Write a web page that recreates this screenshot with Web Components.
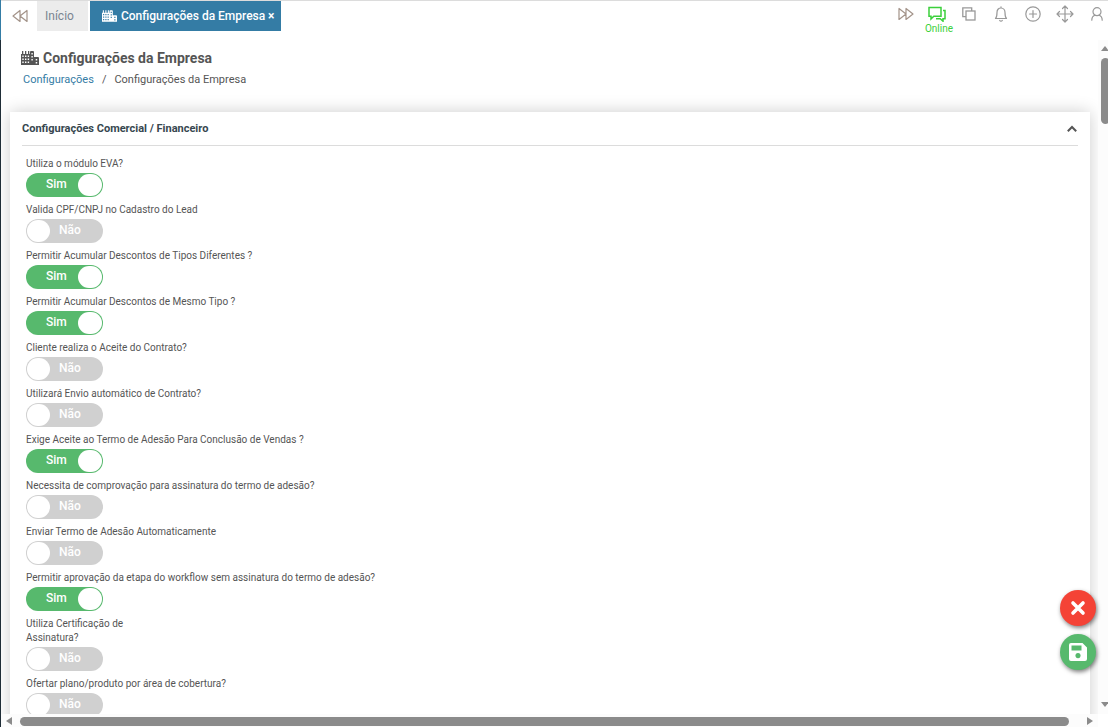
<!DOCTYPE html>
<html lang="pt-BR">
<head>
<meta charset="utf-8">
<title>Configurações da Empresa</title>
<style>
html,body{margin:0;height:100%;overflow:hidden}
body{font-family:Roboto,"Open Sans",sans-serif;color:#555;background:#fff;--blue:#347ca5;--green:#57b96d}
</style>
</head>
<body>
<app-shell>
  <top-bar slot="top"></top-bar>
  <page-header></page-header>
  <config-panel heading="Configurações Comercial / Financeiro">
    <switch-field label="Utiliza o módulo EVA?" on></switch-field>
    <switch-field label="Valida CPF/CNPJ no Cadastro do Lead"></switch-field>
    <switch-field label="Permitir Acumular Descontos de Tipos Diferentes ?" on></switch-field>
    <switch-field label="Permitir Acumular Descontos de Mesmo Tipo ?" on></switch-field>
    <switch-field label="Cliente realiza o Aceite do Contrato?"></switch-field>
    <switch-field label="Utilizará Envio automático de Contrato?"></switch-field>
    <switch-field label="Exige Aceite ao Termo de Adesão Para Conclusão de Vendas ?" on></switch-field>
    <switch-field label="Necessita de comprovação para assinatura do termo de adesão?"></switch-field>
    <switch-field label="Enviar Termo de Adesão Automaticamente"></switch-field>
    <switch-field label="Permitir aprovação da etapa do workflow sem assinatura do termo de adesão?" on></switch-field>
    <switch-field label="Utiliza Certificação de Assinatura?" narrow></switch-field>
    <switch-field label="Ofertar plano/produto por área de cobertura?"></switch-field>
  </config-panel>
  <action-button slot="actions" kind="cancel" label="Cancelar"></action-button>
  <action-button slot="actions" kind="save" label="Salvar"></action-button>
</app-shell>
<script>
const define = (name, render) => customElements.define(name, class extends HTMLElement {
  constructor() { super(); this.attachShadow({mode: 'open'}); }
  connectedCallback() { this.shadowRoot.innerHTML = render(this); }
});

const outline = 'fill="none" stroke="currentColor" stroke-width="1.2" stroke-linejoin="round" stroke-linecap="round"';
const icons = {
  back: `<svg width="16" height="14" viewBox="0 0 16 14" ${outline}><path d="M8 1.5v11L1 7zM15 1.5v11L8 7z"/></svg>`,
  forward: `<svg width="16" height="14" viewBox="0 0 16 14" ${outline}><path d="M1 1.5v11L8 7zM8 1.5v11L15 7z"/></svg>`,
  chat: `<svg width="18" height="16" viewBox="0 0 18 16" fill="none" stroke="currentColor" stroke-width="1.5"><path d="M1 1.5h12v8.7H5.8L3 13v-2.8H1z"/><path d="M15 4.5h2v8.3h-2v2.4l-2.8-2.4H8"/></svg>`,
  copy: `<svg width="16" height="16" viewBox="0 0 16 16" fill="none" stroke="currentColor" stroke-width="1.3"><rect x="5" y="5" width="9" height="9"/><path d="M5 10.700H1.800V1.800H10.700V5"/></svg>`,
  bell: `<svg width="14" height="16" viewBox="0 0 14 16" ${outline}><path d="M1.500 12.500h11C11 11 11 9.500 11 6.500 11 4 9.500 2 7 2S3 4 3 6.500c0 3 0 4.500-1.500 6zM7 .8V2M5.700 14.500c.6.900 2 .9 2.600 0"/></svg>`,
  plus: `<svg width="16" height="16" viewBox="0 0 16 16" ${outline}><circle cx="8" cy="8" r="7.200"/><path d="M8 4.500v7M4.500 8h7"/></svg>`,
  move: `<svg width="18" height="18" viewBox="0 0 18 18" ${outline}><path d="M9 1v16M1 9h16M6.500 3.500L9 1l2.500 2.500M6.500 14.500L9 17l2.500-2.500M3.500 6.500L1 9l2.500 2.500M14.500 6.500L17 9l-2.500 2.500"/></svg>`,
  user: `<svg width="12" height="14" viewBox="0 0 12 14" ${outline} ><circle cx="6" cy="4.700" r="4"/><path d="M.8 13.200c0-2.700 1.200-4.300 3-5M11.200 13.200c0-2.700-1.200-4.300-3-5"/></svg>`,
  city: `<svg width="100%" height="100%" viewBox="0 0 18 14"><path fill="currentColor" fill-rule="evenodd" d="M0 3h1V0h1.300v3H4V0h1.300v3H7V0h1.300v3H9V1q0-1 1-1h2q1 0 1 1v5h4q1 0 1 1v7H0zM1.300 4.500v1.500h1.400V4.500zM4 4.500v1.500h1.400V4.500zM6.700 4.500v1.500h1.400V4.500zM1.300 7.500V9h1.400V7.500zM4 7.500V9h1.400V7.500zM6.700 7.500V9h1.400V7.500zM1.300 10.500V12h1.400v-1.500zM4 10.500V12h1.400v-1.500zM6.700 10.500V12h1.400v-1.500zM10.400 2v1.500h1.400V2zM10.400 5v1.500h1.400V5zM10.400 8v1.500h1.400V8zM14.700 8v1.500h1.500V8zM14.700 11v1.500h1.500V11z"/></svg>`
};

define('app-shell', () => `
<style>
:host{display:grid;height:100vh;grid-template-rows:40px 1fr;border-left:1px solid #1f2d37;box-sizing:border-box;position:relative}
:host::before{content:"";position:absolute;left:-1px;top:0;width:1px;height:40px;background:var(--blue)}
.body{display:grid;grid-template-columns:1fr 10px;grid-template-rows:1fr 13px;min-height:0;min-width:0;position:relative}
main{overflow:hidden;min-width:0;min-height:0;padding:8px 8px 0 9px}
scroll-bar[across]{grid-column:1}
.actions{position:absolute;right:12px;bottom:57px;display:grid;gap:8px}
</style>
<slot name="top"></slot>
<div class="body">
  <main><slot></slot></main>
  <scroll-bar></scroll-bar>
  <scroll-bar across></scroll-bar>
  <div class="actions"><slot name="actions"></slot></div>
</div>`);

define('scroll-bar', el => el.hasAttribute('across') ? `
<style>
:host{display:flex;align-items:center;background:#fcfcfc;padding:1px 5px 0 5px;gap:8px}
.thumb{flex:1;height:9px;border-radius:5px;background:#8b8b8b;margin-right:10px}
i{border:4px solid transparent;border-right:6px solid #8b8b8b;border-left:0}
i.end{border-right:0;border-left:6px solid #8b8b8b}
</style><i></i><div class="thumb"></div><i class="end"></i>` : `
<style>
:host{display:flex;flex-direction:column;align-items:flex-start;background:#fcfcfc;padding:6px 0 7px 3px;box-sizing:border-box;overflow:hidden}
.thumb{height:10%;width:9px;border-radius:5px;background:#8b8b8b;margin:7px 0 auto}
i{border:4px solid transparent;border-bottom:5px solid #8b8b8b;border-top:0}
i.end{border-bottom:0;border-top:5px solid #8b8b8b}
</style><i></i><div class="thumb"></div><i class="end"></i>`);

define('top-bar', () => `
<style>
:host{display:flex;justify-content:space-between;align-items:flex-start;border-top:1px solid #dcdcdc;background:#fff}
nav,.tools{display:flex}
nav{gap:2px}
a{display:flex;align-items:center;height:30px;box-sizing:border-box;font-size:12px;text-decoration:none;color:#7b8591;background:#ececec;padding:0 14px 0 8px}
a.on{background:var(--blue);color:#fff;font-weight:500;padding:0 0 0 12px}
.active{display:flex;background:var(--blue)}
.city{width:15px;height:12px;margin-right:4px;display:flex}
button{border:0;background:none;padding:0;margin:0;font:inherit;color:#999;display:flex;justify-content:center}
.back{width:34px;height:30px;align-items:center;padding-left:4px;color:#a39389}
.close{color:#fff;font-size:12px;font-weight:700;align-items:center;width:16px;padding:0 4px 0 0}
.tools button{width:32px;height:36px;align-items:flex-start;padding-top:5px}
.tools .fwd{width:30px;padding-top:6px;color:#a39389}
.tools .chat{width:36px;flex-direction:column;align-items:center;justify-content:flex-start;color:#3bd03b;font-size:10px;line-height:12px}
.chat svg{margin:0 4px 1px 0}
.tools .copy{width:28px;padding-right:4px}
.tools .move{padding-top:4px}
.tools .user{width:27px;padding:6px 5px 0 10px}
</style>
<nav><button class="back" aria-label="Anterior">${icons.back}</button><a href="#inicio">Início</a><div class="active"><a class="on" href="#empresa"><span class="city">${icons.city}</span>Configurações da Empresa</a><button class="close">×</button></div></nav>
<div class="tools"><button class="fwd" aria-label="Próximo">${icons.forward}</button><button class="chat">${icons.chat}Online</button><button class="copy" aria-label="Copiar">${icons.copy}</button><button aria-label="Notificações">${icons.bell}</button><button aria-label="Adicionar">${icons.plus}</button><button class="move" aria-label="Mover">${icons.move}</button><button class="user" aria-label="Usuário">${icons.user}</button></div>`);

define('page-header', () => `
<style>
:host{display:block;padding:0 11px;height:64px}
h1{display:flex;align-items:center;margin:0;font-size:14px;line-height:20px;font-weight:700;gap:4px}
.city{width:18px;height:14px;display:flex}
nav{display:flex;font-size:11px;line-height:16px;gap:8px;padding:4px 2px}
a{color:var(--blue);text-decoration:none}
</style>
<h1><span class="city">${icons.city}</span>Configurações da Empresa</h1>
<nav><a href="#configuracoes">Configurações</a><span>/</span><span>Configurações da Empresa</span></nav>`);

define('config-panel', el => `
<style>
:host{display:block;background:#fff;box-shadow:0 0 16px rgba(0,0,0,.2);padding:0 12px 12px}
header{display:flex;justify-content:space-between;align-items:center;height:33px;border-bottom:1px solid #dcdcdc}
h2{margin:0;font-size:11px;font-weight:700;color:#37474f}
button{border:0;background:none;padding:0 1px 0 0;display:flex;color:#555}
.fields{display:grid;gap:6px;padding:11px 4px}
</style>
<header><h2>${el.getAttribute('heading')}</h2><button aria-label="Recolher"><svg width="10" height="8" viewBox="0 0 10 8" fill="none" stroke="currentColor" stroke-width="2"><path d="M.8 6.300L5 2l4.200 4.300"/></svg></button></header>
<div class="fields"><slot></slot></div>`);

define('switch-field', el => {
  const on = el.hasAttribute('on');
  return `
<style>
:host{display:block;font-size:10px;line-height:14px}
:host([narrow]){max-width:110px}
label{display:block;margin-bottom:2px}
.switch{display:grid;width:77px;height:24px;align-items:center;color:#fff;font-size:12px;font-weight:500}
.switch>*{grid-area:1/1}
input{appearance:none;margin:0;width:77px;height:24px;border-radius:12px;background:#d0d0d0;display:flex;align-items:center;padding:0 1px;box-sizing:border-box}
input::before{content:"";width:23px;height:22px;border-radius:12px;background:#fff}
input:checked{background:var(--green);justify-content:flex-end}
input:checked::before{width:24px}
.text{pointer-events:none;padding:0 0 2px 33px}
input:checked+.text{padding-left:20px}
</style>
<label for="field">${el.getAttribute('label')}</label>
<div class="switch"><input id="field" type="checkbox" role="switch"${on ? ' checked' : ''}><span class="text">${on ? 'Sim' : 'Não'}</span></div>`;
});

define('action-button', el => {
  const save = el.getAttribute('kind') === 'save';
  return `
<style>
:host{display:block}
button{width:36px;height:36px;border:0;border-radius:50%;padding:0;display:grid;place-items:center;background:${save ? 'var(--green)' : '#f44336'};box-shadow:1px 2px 4px rgba(0,0,0,.5)}
</style>
<button aria-label="${el.getAttribute('label')}">${save
  ? '<svg width="18" height="18" viewBox="0 0 18 18"><path fill="#fff" fill-rule="evenodd" d="M2 0h11.500L18 4.500V16q0 2-2 2H2q-2 0-2-2V2Q0 0 2 0zM2.500 2.500V7.500H12.500V2.500zM9 10a2.600 2.600 0 1 0 .01 0z"/></svg>'
  : '<svg width="16" height="16" viewBox="0 0 16 16"><path d="M3 3l10 10M13 3L3 13" stroke="#fff" stroke-width="3.600" stroke-linecap="round"/></svg>'}</button>`;
});
</script>
</body>
</html>
